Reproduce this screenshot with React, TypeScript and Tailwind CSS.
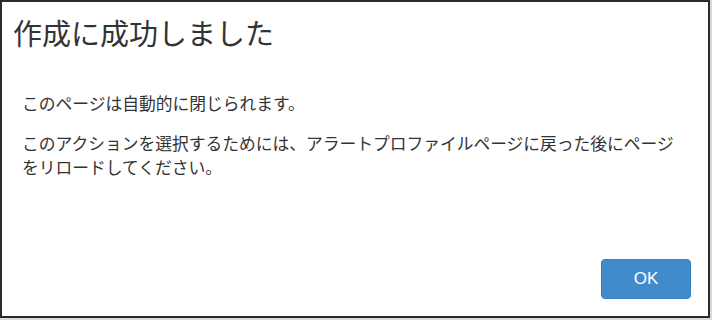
import React from "react";

export default function App() {
  return (
    <div className="w-[712px] h-[320px] bg-[#d9d9d9]" style={{ fontFamily: '"Noto Sans CJK JP", "Noto Sans", sans-serif' }}>
      <div className="w-[710px] h-[318px] bg-white border-2 border-[#2a2a2a] flex flex-col text-[#333]">
        <div className="pl-[11px] pt-[12px] h-[62px]">
          <h1 className="text-[29px] leading-[36px] font-normal">作成に成功しました</h1>
        </div>
        <div className="pl-[20px] pt-[27px] w-[682px] flex flex-col gap-[16px] text-[16.75px] leading-[24px]">
          <p>このページは自動的に閉じられます。</p>
          <p>このアクションを選択するためには、アラートプロファイルページに戻った後にページをリロードしてください。</p>
        </div>
        <div className="mt-auto flex justify-end pr-[17px] pb-[17px]">
          <button className="w-[90px] h-[40px] rounded-[4px] bg-[#428bca] text-white text-[17px] border border-[#3a80bf]" style={{ fontFamily: '"Liberation Sans", Arial, sans-serif' }}>OK</button>
        </div>
      </div>
    </div>
  );
}
